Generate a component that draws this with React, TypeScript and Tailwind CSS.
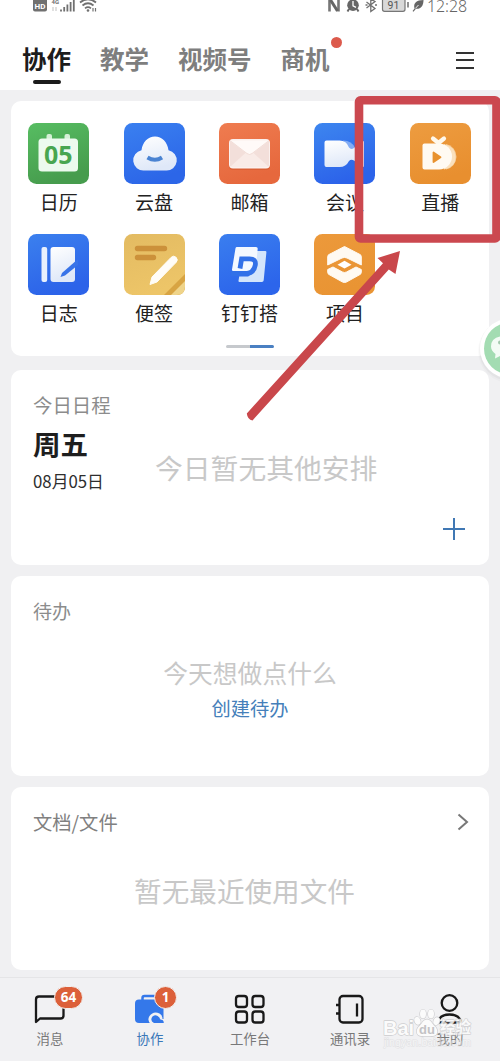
import React from "react";

const G = ({ id, from, to, x2 = 0, y2 = 1 }: { id: string; from: string; to: string; x2?: number; y2?: number }) => (
  <linearGradient id={id} x1="0" y1="0" x2={x2} y2={y2}>
    <stop offset="0" stopColor={from} />
    <stop offset="1" stopColor={to} />
  </linearGradient>
);

function Tile({ id, from, to, children }: { id: string; from: string; to: string; children: React.ReactNode }) {
  return (
    <svg viewBox="0 0 61 61" className="block size-[61px]">
      <defs>
        <G id={id} from={from} to={to} x2={0.35} />
        <G id={id + "w"} from="#ffffff" to="#dfe8f8" x2={0.3} />
      </defs>
      <rect width="61" height="61" rx="8.5" fill={`url(#${id})`} />
      {children}
    </svg>
  );
}

const CalendarIcon = () => (
  <Tile id="cal" from="#57bd62" to="#469c4d">
    <rect x="18.5" y="11" width="5.5" height="8" rx="2" fill="#d5f0d6" />
    <rect x="36.5" y="11" width="5.5" height="8" rx="2" fill="#d5f0d6" />
    <rect x="10.5" y="15.5" width="39.5" height="33" rx="3.5" fill="#ecfaee" />
    <text x="30.3" y="41.2" textAnchor="middle" fontSize="25" fontWeight="700" fontFamily="Noto Sans" fill="#48a650">05</text>
  </Tile>
);

const CloudIcon = () => (
  <Tile id="cloud" from="#3a80f0" to="#2c66e8">
    <path d="M20 47.500a10.200 10.200 0 0 1-2.500-20.200C18.500 19 24 13.500 31 13.500S43.500 19 44.500 27.300a10.200 10.200 0 0 1-2.500 20.200Z" fill="url(#cloudw)" />
    <path d="M23.500 34.500q7.500 4.500 14.500 0" fill="none" stroke="#4a83d2" strokeWidth="4" />
  </Tile>
);

const MailIcon = () => (
  <Tile id="mail" from="#ef7c50" to="#e6683d">
    <rect x="10" y="18" width="41" height="29" rx="4" fill="#cf572e" opacity=".55" />
    <rect x="10" y="16" width="41" height="29.500" rx="4" fill="#fbf0ed" />
    <path d="m11 18 17 13q2.500 2 5 0l17-13v25H11Z" fill="#f3dfda" />
    <path d="m11 44 16-14.500h7L50 44Z" fill="#f9ebe7" />
    <path d="m11 17.500 17 13q2.500 2 5 0l17-13" fill="#fffaf8" stroke="#ecd3cc" strokeWidth=".7" />
  </Tile>
);

const MeetingIcon = () => (
  <Tile id="meet" from="#3d86ef" to="#2c63ea">
    <path d="M29 17.500q9 0 12 7.500l-5 9Z" fill="#83acf4" />
    <path d="M12.500 17.500h13q7 0 9.500 7 2 2.500 5 .5l8-6.500q2-1.200 2 1v23q0 2.500-2 1l-8-6q-3-1.500-5 .500-3 6-9.500 6h-13q-2 0-2-2v-22.500q0-2 2-2Z" fill="url(#meetw)" />
  </Tile>
);

const LiveIcon = () => (
  <Tile id="live" from="#ed9c40" to="#e88f2f">
    <path d="M36 21a13 13 0 0 1 0 25.500Z" fill="#f6cf9d" />
    <path d="M34 21q11.500 3 11.500 13t-11.500 12.500Z" fill="#fae0bd" />
    <path d="m23 15.500 5.500 4.500L34 15.500" fill="none" stroke="#fff8ec" strokeWidth="4.200" strokeLinecap="round" strokeLinejoin="round" />
    <path d="M14.500 20.500H29a13 13 0 0 1 0 26H14.500q-2 0-2-2v-22q0-2 2-2Z" fill="#fffaf2" />
    <path d="M23.500 29.500v9.500l7-4.700Z" fill="#e8922f" stroke="#e8922f" strokeWidth="1.800" strokeLinejoin="round" />
  </Tile>
);

const LogIcon = () => (
  <Tile id="log" from="#3b80ee" to="#2c63e9">
    <rect x="13.500" y="13" width="5.700" height="35" rx="2" fill="#e8f0fd" />
    <rect x="22.500" y="13" width="24.500" height="35" rx="3" fill="url(#logw)" />
    <path d="m50 25-16 14-1.500 4 4.500-1.500L50 31Z" fill="#3873e8" />
  </Tile>
);

const NoteIcon = () => (
  <Tile id="note" from="#e3bb62" to="#edc568">
    <path d="M61 40 40 61h12.500q8.500 0 8.500-8.500Z" fill="#d8a443" />
    <path d="M61 47 47 61h5.500q8.500 0 8.500-8.500Z" fill="#efd48a" />
    <path d="M13.500 14.500h27M13.500 23.500h16" stroke="#cc913a" strokeWidth="5.400" strokeLinecap="round" />
    <path d="m26 50.500 2-7.500 19-19.500q2.500-2.500 5-.200 2.500 2.500.2 5L33 48Z" fill="#fffdf8" stroke="#fffdf8" strokeWidth="1" strokeLinejoin="round" />
  </Tile>
);

const DingIcon = () => (
  <Tile id="ding" from="#3a7eef" to="#2c65eb">
    <path d="M36 17h10.200q1.300 0 1.200 1.300l-2.700 28q-.200 1.700-1.800 1.700H20.500q-1.200 0-1-1.200l.7-4.300h9l6-5Z" fill="#d3e5fb" />
    <path d="M18 13h19q1.800 0 1.700 1.800L36.500 37H14.200q-1.500 0-1.200-1.500L16.500 14.300Q16.700 13 18 13Z" fill="#f3f8ff" />
    <path d="M21 34.500 22.600 24.800H30.500Q37.300 24.800 36.300 31 34.800 39.700 26 39.700H12" fill="none" stroke="#3271e8" strokeWidth="4.800" />
  </Tile>
);

const ProjectIcon = () => (
  <Tile id="proj" from="#ec993b" to="#e99433">
    <path d="M30.500 12.500 46 20.500q1.300.7 1.300 2V31L33 24q-2.500-1.200-5 0L13.700 31v-8.500q0-1.300 1.300-2Z" fill="#fffaf2" stroke="#fffaf2" strokeLinejoin="round" />
    <path d="M13.700 35.500 19 33l9.500 5q2 1 4 0L42 33l5.300 2.500v3q0 1.300-1.300 2L32.500 48q-2 1-4 0L15 40.500q-1.300-.7-1.300-2Z" fill="#fffaf2" stroke="#fffaf2" strokeLinejoin="round" />
    <path d="m30.500 26.800 7 3.900-7 3.900-7-3.900Z" fill="#fff" />
  </Tile>
);

const rows = [
  [
    { label: "日历", Icon: CalendarIcon },
    { label: "云盘", Icon: CloudIcon },
    { label: "邮箱", Icon: MailIcon },
    { label: "会议", Icon: MeetingIcon },
    { label: "直播", Icon: LiveIcon },
  ],
  [
    { label: "日志", Icon: LogIcon },
    { label: "便签", Icon: NoteIcon },
    { label: "钉钉搭", Icon: DingIcon },
    { label: "项目", Icon: ProjectIcon },
  ],
];

function StatusBar() {
  return (
    <div className="flex h-4 items-start justify-between pr-[33px] pl-[33px] text-[#707070]">
      <svg viewBox="0 0 66 14" className="h-[14px] w-[66px]">
        <rect y="-3" width="14" height="14.500" rx="2" fill="#707070" />
        <text x="7" y="8.500" fontSize="8" fontWeight="700" textAnchor="middle" fontFamily="Roboto" fill="#fff">HD</text>
        <text x="18.500" y="3.500" fontSize="6" fontWeight="700" fontFamily="Roboto" fill="#707070">4G</text>
        <path d="M20 7v4M23 7v4" stroke="#ccc" strokeWidth="1.200" />
        <path d="M28 11.500v-2M31.200 11.500V7M34.400 11.500V4.500M37.600 11.500V2M40.800 11.500V-1" stroke="#707070" strokeWidth="1.800" />
        <g fill="none" stroke="#707070" strokeWidth="1.700">
          <path d="M47 2.500q8-6.500 16 0M49.500 5.500q5.500-4.500 11 0M52 8.300q3-2.500 6 0" />
        </g>
        <circle cx="55" cy="10.500" r="1.300" fill="#707070" />
        <path d="M60 8v3.500M62.500 8v3.500" stroke="#707070" strokeWidth="1.200" />
      </svg>
      <div className="flex items-start">
        <svg viewBox="0 0 100 14" className="h-[14px] w-[100px]">
          <path d="M4.500 11.500V-1M13.500 11.500V-1" stroke="#777" strokeWidth="2.600" />
          <path d="M5.500 0 12.500 11" stroke="#666" strokeWidth="3" />
          <circle cx="28" cy="5.200" r="5.800" fill="#666" />
          <path d="m24 9-1.500 2.500M32 9l1.500 2.500" stroke="#666" strokeWidth="2" />
          <path d="M28 1v4.800l3 1.500" fill="none" stroke="#fff" strokeWidth="1.300" />
          <path d="m41.500 2 8.500 6.500-4.200 3V-1l4.200 2.500-8.500 6.500" fill="none" stroke="#707070" strokeWidth="1.300" />
          <path d="M40.500 5h2M50 5h2" stroke="#707070" strokeWidth="1.300" />
          <rect x="57.500" y="-3" width="22.500" height="14.300" rx="2" fill="#d9d9d9" stroke="#777" strokeWidth="1.200" />
          <text x="68.500" y="8.800" fontSize="10.500" textAnchor="middle" fontFamily="Roboto" fill="#555">91</text>
          <path d="M83 2v5.500" stroke="#777" strokeWidth="1.600" />
          <path d="M98.500 0c-7 0-10.500 3-9 8.500C95 10 98.500 6.500 98.500 0Z" fill="#666" />
          <path d="m88 11 5.500-6" stroke="#fff" strokeWidth=".9" />
          <path d="m88 11.300 2.500-3" stroke="#666" strokeWidth="1.200" />
        </svg>
        <span className="-mt-1 ml-[2px] font-['Noto_Sans','Noto_Sans_CJK_SC',sans-serif] text-[16px] leading-[20px] font-light tracking-[-0.1px] text-[#666]">12:28</span>
      </div>
    </div>
  );
}

function Header() {
  return (
    <header className="h-[90px] bg-white">
      <StatusBar />
      <div className="flex items-start justify-between pt-[28px] pr-[26px] pl-[22px]">
        <nav className="flex gap-[29px] text-[24.500px] leading-[30px] font-bold text-[#7e7e7e]">
          <div className="flex flex-col items-center text-[#1c1c1c]">
            协作
            <span className="mt-[6px] h-[4px] w-[28px] rounded-full bg-[#1c1c1c]" />
          </div>
          <span>教学</span>
          <span>视频号</span>
          <span className="relative">
            商机
            <i className="absolute -top-[7px] -right-[12px] size-[11px] rounded-full bg-[#dc5a4c]" />
          </span>
        </nav>
        <div className="mt-[7.500px] flex w-[18.500px] flex-col gap-[5.500px]">
          <i className="h-[2px] bg-[#333]" />
          <i className="h-[2px] bg-[#333]" />
          <i className="h-[2px] bg-[#333]" />
        </div>
      </div>
    </header>
  );
}

function NavItem({ label, active, badge, children }: { label: string; active?: boolean; badge?: string; children: React.ReactNode }) {
  return (
    <div className="flex flex-1 flex-col items-center">
      <div className="relative mt-[14px] size-[34px]">
        <svg viewBox="0 0 34 34" className="size-[34px]" fill="none" stroke="#191919" strokeWidth="2.300">
          {children}
        </svg>
        {badge && (
          <span
            className={
              "absolute -top-[6px] flex h-[23px] items-center justify-center rounded-full border border-[#f3f0ee] bg-[#dc603a] font-['Noto_Sans'] text-[13.500px] font-bold text-white " +
              (badge.length > 1 ? "left-[21px] w-[29px]" : "left-[21px] w-[23px]")
            }
          >
            {badge}
          </span>
        )}
      </div>
      <span className={"mt-[2px] text-[13.400px] leading-5 " + (active ? "text-[#3a78b8]" : "text-[#787878]")}>{label}</span>
    </div>
  );
}

function BottomNav() {
  return (
    <nav className="flex h-[84px] border-t border-[#e5e5e7] bg-[#f1f1f3]">
      <NavItem label="消息" badge="64">
        <path d="M3 30V7.500q0-3 3-3h22q2.500 0 2.500 3v16q0 3-3 3H7Z" strokeLinejoin="round" />
      </NavItem>
      <NavItem label="协作" active badge="1">
        <path d="M9.500 8V6q0-2 2-2h10q2 0 2 2v2" stroke="#3478ea" strokeWidth="2.500" />
        <rect x="2" y="7.500" width="28.500" height="23.500" rx="4" fill="#3478ea" stroke="none" />
        <path d="M18.500 33q-5-4-2-9 4-5.500 10-2.500 3 1.500 3 5.500h5v8H18Z" fill="#f1f1f3" stroke="none" />
        <path d="M21 31q-4.500-2.500-1.500-6.500 4-3.200 7 1.200.5 2.300 2 2 2.300.2 2.300 3.300Z" fill="#3478ea" stroke="none" />
      </NavItem>
      <NavItem label="工作台">
        <rect x="3" y="4" width="11" height="11" rx="2.800" />
        <rect x="19.500" y="4" width="11" height="11" rx="2.800" />
        <rect x="3" y="19.500" width="11" height="11" rx="2.800" />
        <rect x="19.500" y="19.500" width="11" height="11" rx="2.800" />
      </NavItem>
      <NavItem label="通讯录">
        <rect x="6.500" y="4" width="23" height="26.500" rx="3.500" />
        <path d="M3 13h3.500M3 21.500h3.500M24 11.500v13" />
      </NavItem>
      <NavItem label="我的">
        <circle cx="16.500" cy="11" r="7.800" />
        <path d="M5.500 28.500q2.500-6 11-6t11 6q-.500 2-2.500 2H8q-2.500 0-2.500-2Z" />
      </NavItem>
    </nav>
  );
}

function Watermark() {
  return (
    <svg viewBox="0 0 100 50" className="pointer-events-none absolute top-[1003px] left-[380px] h-[50px] w-[100px]">
      <g fill="#fbfbfb" stroke="#cdcdcf" strokeWidth="1.300" paintOrder="stroke" strokeLinejoin="round">
        <text x="3" y="32" fontSize="20" fontWeight="700" fontFamily="Liberation Sans">Bai</text>
        <ellipse cx="37.500" cy="18" rx="3" ry="4" transform="rotate(-20 37 18)" />
        <ellipse cx="43" cy="11" rx="3" ry="4.400" />
        <ellipse cx="51" cy="11" rx="3" ry="4.400" />
        <ellipse cx="56.500" cy="18" rx="3" ry="4" transform="rotate(20 56 18)" />
        <path d="M47 16.500c4 0 5 4.500 8 7s3.500 9-2 9.500c-3 .300-9 .300-12 0-5.500-.500-5-7-2-9.500s4-7 8-7Z" />
        <text x="60" y="30" fontSize="15.500" fontWeight="700" fontFamily="Noto Sans CJK SC" opacity=".85">经验</text>
      </g>
      <text x="47" y="31" textAnchor="middle" fontSize="13" fontWeight="700" fontFamily="Liberation Sans" fill="#c3c3c5">du</text>
      <text x="4" y="43" fontSize="10.500" textLength="87" fontFamily="Liberation Sans" fill="#fafafa" stroke="#d0d0d2" strokeWidth="1" paintOrder="stroke" opacity=".5">jingyan.baidu.com</text>
    </svg>
  );
}

export default function App() {
  return (
    <div className="relative flex h-[1061px] w-[500px] flex-col overflow-hidden bg-[#f0f0f2] font-['Noto_Sans_CJK_SC',sans-serif]">
      <Header />
      <main className="flex flex-1 flex-col px-[11px] pt-[11px]">
        <section className="flex h-[255px] flex-col items-center rounded-[10px] bg-white pt-[22px]">
          {rows.map((row, i) => (
            <div key={i} className="grid h-[111px] w-[477px] grid-cols-5 self-start">
              {row.map(({ label, Icon }) => (
                <div key={label} className="flex flex-col items-center">
                  <Icon />
                  <span className="mt-[4px] text-[19px] leading-[28px] whitespace-nowrap text-[#222]">{label}</span>
                </div>
              ))}
            </div>
          ))}
          <div className="flex h-[3px] w-[48px] overflow-hidden rounded-full">
            <i className="flex-1 bg-[#c6c9cd]" />
            <i className="flex-1 bg-[#4a80c2]" />
          </div>
        </section>

        <section className="mt-[14px] flex h-[195px] flex-col rounded-[10px] bg-white px-[22px] pt-[20px]">
          <h2 className="text-[19.400px] leading-[30px] text-[#8c8c8c]">今日日程</h2>
          <div className="flex">
            <div className="w-[122px]">
              <div className="mt-[3px] text-[27.500px] leading-[40px] font-bold text-[#1e1e1e]">周五</div>
              <div className="mt-[6px] text-[16.800px] leading-[24px] text-[#2e2e2e]">08月05日</div>
            </div>
            <p className="mt-[27px] text-[27.800px] leading-[40px] text-[#c8c8c8]">今日暂无其他安排</p>
          </div>
          <svg viewBox="0 0 22 22" className="mt-[25px] mr-[2px] size-[22px] shrink-0 self-end" stroke="#4078b4" strokeWidth="2">
            <path d="M0 11h22M11 0v22" />
          </svg>
        </section>

        <section className="mt-[11px] flex h-[200px] flex-col items-center rounded-[10px] bg-white px-[22px] pt-[20px]">
          <h2 className="self-start text-[19px] leading-[30px] text-[#8c8c8c]">待办</h2>
          <p className="mt-[26px] text-[24.800px] leading-[40px] text-[#c8c8c8]">今天想做点什么</p>
          <p className="mt-px text-[19.300px] leading-[30px] text-[#457fba]">创建待办</p>
        </section>

        <section className="mt-[11px] flex h-[183px] flex-col rounded-[10px] bg-white px-[22px] pt-[20px]">
          <div className="flex items-center justify-between">
            <h2 className="text-[19.300px] leading-[30px] text-[#808080]">文档/文件</h2>
            <svg viewBox="0 0 12 18" className="-mr-[2px] h-[18px] w-[12px]" fill="none" stroke="#777" strokeWidth="2">
              <path d="m1.500 1.500 8.500 7.500-8.500 7.500" />
            </svg>
          </div>
          <p className="mt-[33px] -ml-[11px] text-center text-[27.600px] leading-[40px] text-[#c8c8c8]">暂无最近使用文件</p>
        </section>
      </main>
      <BottomNav />

      <svg viewBox="0 0 60 80" className="absolute top-[309px] left-[472px] h-[80px] w-[60px]">
        <circle cx="38" cy="42" r="32" fill="#000" opacity=".02" />
        <circle cx="38" cy="41" r="31" fill="#000" opacity=".03" />
        <circle cx="38" cy="39.500" r="30" fill="#fff" />
        <circle cx="38" cy="39.500" r="26" fill="#a3dcb2" />
        <path d="M34 27q-15 0-15 10.500 0 4 4.500 7.500l-.500 4.500 5-2.500q6 1 12-2V27Z" fill="#f3fbf5" />
        <circle cx="28" cy="33.500" r="2" fill="#a3c9ad" />
      </svg>
      <svg viewBox="0 0 500 450" className="pointer-events-none absolute top-0 left-0 h-[450px] w-[500px]">
        <rect x="359" y="100.300" width="137.500" height="138.200" rx="1.500" fill="none" stroke="#cb484f" strokeWidth="8.600" />
        <path d="M400 251 377.500 258 383 263.300 246.800 413.500Q247.500 419.500 252.500 420.500L388.800 269.500 395.500 274Z" fill="#c9474b" />
      </svg>
      <Watermark />
    </div>
  );
}
